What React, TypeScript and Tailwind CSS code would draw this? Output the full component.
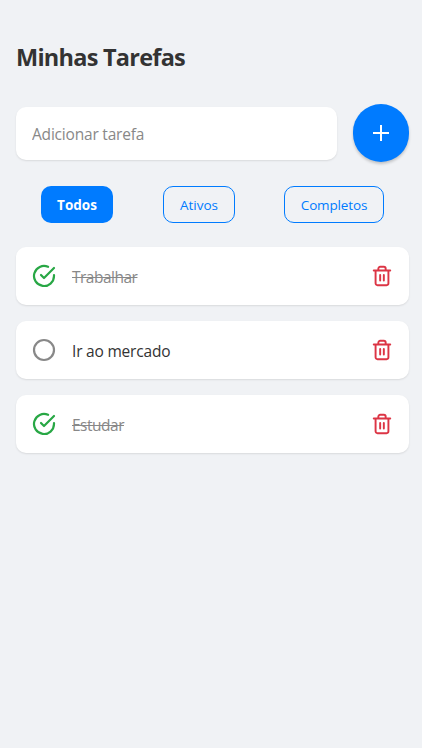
import React from "react";

type Task = { id: number; title: string; done: boolean };

const tasks: Task[] = [
  { id: 1, title: "Trabalhar", done: true },
  { id: 2, title: "Ir ao mercado", done: false },
  { id: 3, title: "Estudar", done: true },
];

function CheckIcon() {
  return (
    <svg width="24" height="24" viewBox="0 0 24 24" fill="none" stroke="#28a745" strokeWidth="2.2" strokeLinecap="round" strokeLinejoin="round">
      <path d="M22 11.08V12a10 10 0 1 1-5.93-9.14" />
      <path d="M22 4 12 14.01l-3-3" />
    </svg>
  );
}

function CircleIcon() {
  return (
    <svg width="24" height="24" viewBox="0 0 24 24" fill="none" stroke="#888888" strokeWidth="2.2">
      <circle cx="12" cy="12" r="10" />
    </svg>
  );
}

function TrashIcon() {
  return (
    <svg width="22" height="22" viewBox="0 0 24 24" fill="none" stroke="#dc3545" strokeWidth="2.1" strokeLinecap="round" strokeLinejoin="round">
      <path d="M3 6h18M19 6v14a2 2 0 0 1-2 2H7a2 2 0 0 1-2-2V6m3 0V4a2 2 0 0 1 2-2h4a2 2 0 0 1 2 2v2M10 11v6M14 11v6" />
    </svg>
  );
}

function TaskRow({ task }: { task: Task }) {
  return (
    <li className="flex h-[58px] items-center rounded-[10px] bg-white px-4 shadow-[0_1px_2px_rgba(0,0,0,0.1)]">
      <button>{task.done ? <CheckIcon /> : <CircleIcon />}</button>
      <span className={task.done ? "ml-4 flex-1 pt-1 text-[15.5px] tracking-[-0.5px] text-[#888] line-through" : "ml-4 flex-1 pt-1 text-[15.5px] tracking-[-0.2px] text-[#333]"}>
        {task.title}
      </span>
      <button>
        <TrashIcon />
      </button>
    </li>
  );
}

export default function App() {
  return (
    <main className="min-h-screen bg-[#f0f2f5] pt-10 pr-[13px] pl-4 font-['Open_Sans','Noto_Sans',sans-serif]">
      <h1 className="h-9 text-[23.5px] leading-[35px] font-bold tracking-[-0.75px] text-[#333]">Minhas Tarefas</h1>
      <div className="mt-7 flex items-center gap-4">
        <input className="h-[53px] min-w-0 flex-1 rounded-[10px] bg-white px-4 pt-[2px] text-[15.5px] tracking-[-0.2px] shadow-[0_1px_2px_rgba(0,0,0,0.1)] placeholder:text-[#888]" placeholder="Adicionar tarefa" />
        <button className="flex h-[58px] w-14 items-center justify-center rounded-full bg-[#007bff] shadow-[0_2px_3px_rgba(0,0,0,0.2)]">
          <svg width="24" height="24" viewBox="0 0 24 24" stroke="white" strokeWidth="2">
            <path d="M12 4v16M4 12h16" />
          </svg>
        </button>
      </div>
      <div className="mt-6 flex justify-between px-[25px] text-[13.5px]">
        <button className="h-[37px] w-[72px] rounded-[10px] bg-[#007bff] pt-px font-bold text-white">Todos</button>
        <button className="ml-px h-[37px] w-[72px] rounded-[10px] border border-[#007bff] pt-px text-[#007bff]">Ativos</button>
        <button className="h-[37px] w-[100px] rounded-[10px] border border-[#007bff] pt-px tracking-[-0.15px] text-[#007bff]">Completos</button>
      </div>
      <ul className="mt-6 flex flex-col gap-4">
        {tasks.map((task) => (
          <TaskRow key={task.id} task={task} />
        ))}
      </ul>
    </main>
  );
}
